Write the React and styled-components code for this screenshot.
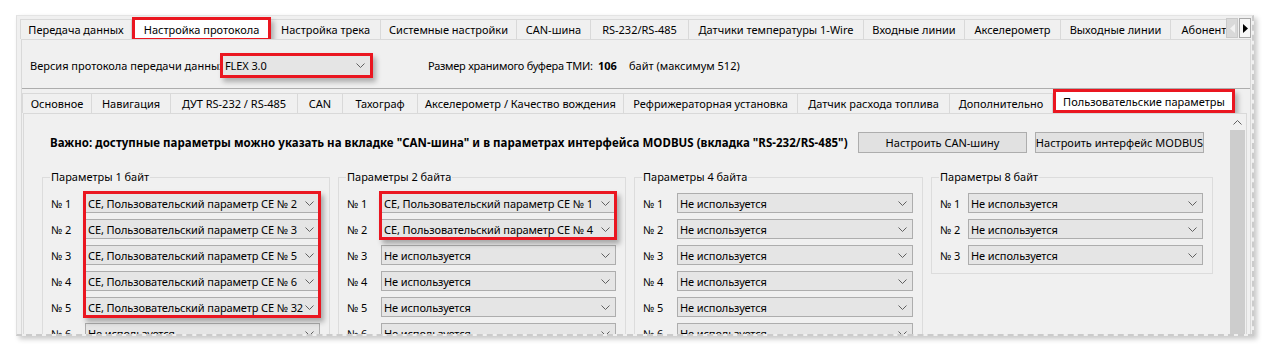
import React from "react";
import styled, { createGlobalStyle, css } from "styled-components";

const RED = "#ea1620";

const GlobalStyle = createGlobalStyle`
  html, body { margin: 0; padding: 0; background: #fff; }
  body {
    font-family: "Noto Sans", "Segoe UI", sans-serif;
    font-size: 11px;
    color: #000;
  }
`;

const ring = css`
  box-shadow: 0 0 0 3px ${RED}, 3px 4px 5px 3px rgba(0, 0, 0, 0.28);
  position: relative;
  z-index: 2;
`;

const Page = styled.div`
  padding: 15px 0 0 16px;
  height: 351px;
  box-sizing: border-box;
`;

const Window = styled.div`
  width: 1238px;
  height: 321px;
  box-sizing: border-box;
  background: #f0f0f0;
  overflow: hidden;
  padding: 0 1px 0 4px;
  border-top: 1px solid #e4e4e4;
  border-left: 1px solid #e0e0e0;
  border-right: 2px dashed #cbcbcb;
  border-bottom: 2px dashed #cbcbcb;
  box-shadow: 3px 3px 5px rgba(0, 0, 0, 0.22);
  display: flex;
  flex-direction: column;
`;

const TabStrip = styled.div`
  display: flex;
  align-items: flex-end;
  height: ${(p) => p.$h}px;
  flex: none;
`;

const TabList = styled.div`
  display: flex;
  align-items: flex-end;
  flex: 1;
  min-width: 0;
  height: 100%;
  overflow: hidden;
  padding: 0 3px;
  margin: 0 -3px;
`;

const Tab = styled.div`
  flex: none;
  width: ${(p) => p.$w}px;
  height: ${(p) => (p.$active ? p.$h - 2 : p.$h)}px;
  box-sizing: border-box;
  border: 1px solid #d9d9d9;
  border-bottom: none;
  margin-left: -1px;
  background: #f0f0f0;
  display: flex;
  align-items: center;
  justify-content: center;
  white-space: nowrap;
  ${(p) =>
    p.$active &&
    css`
      background: #fff;
      margin: 0 3px ${p.$drop}px 3px;
      border: none;
      ${ring}
    `}
`;

const ArrowBox = styled.div`
  width: 12px;
  height: 20px;
  box-sizing: border-box;
  border: 1px solid ${(p) => (p.$off ? "#c9c9c9" : "#a8a8a8")};
  background: ${(p) => (p.$off ? "#d9d9d9" : "#f6f6f6")};
  margin: 0 0 1px 1px;
  align-self: flex-end;
  display: flex;
  align-items: center;
  justify-content: center;
`;

const TopPage = styled.div`
  flex: 1;
  border: 1px solid #d9d9d9;
  border-bottom: none;
  display: flex;
  flex-direction: column;
  min-height: 0;
`;

const ProtocolRow = styled.div`
  display: flex;
  align-items: center;
  height: 49px;
  padding: 2px 0 0 8px;
  box-sizing: border-box;
  border-bottom: 1px solid #adadad;
  flex: none;
`;

const FieldText = styled.div`
  flex: none;
  width: ${(p) => p.$w}px;
  margin-left: ${(p) => p.$ml || 0}px;
  font-weight: ${(p) => (p.$bold ? 700 : 400)};
  letter-spacing: ${(p) => p.$ls || 0}px;
  white-space: nowrap;
`;

const ComboBox = styled.div`
  width: ${(p) => (p.$w ? `${p.$w}px` : "auto")};
  min-width: 0;
  height: ${(p) => (p.$w ? 21 : 20)}px;
  box-sizing: border-box;
  border: 1px solid ${(p) => (p.$mark ? RED : "#adadad")};
  background: #e5e5e5;
  display: flex;
  align-items: center;
  padding: 0 5px 0 2px;
  white-space: nowrap;
  letter-spacing: -0.1px;
  grid-column: 2;
  grid-row: ${(p) => p.$row || "auto"};
  ${(p) =>
    p.$mark &&
    css`
      box-shadow: 0 0 0 2px ${RED}, 3px 4px 5px 2px rgba(0, 0, 0, 0.28);
    `}
  span {
    flex: 1;
    min-width: 0;
    overflow: hidden;
  }
`;

const InnerArea = styled.div`
  flex: 1;
  display: flex;
  flex-direction: column;
  margin: 0 3px 0 1px;
  min-height: 0;
`;

const InnerPage = styled.div`
  flex: 1;
  display: flex;
  border: 1px solid #d9d9d9;
  border-bottom: none;
  min-height: 0;
`;

const ScrollContent = styled.div`
  flex: 1;
  padding: 18px 0 0 18px;
  min-width: 0;
`;

const NoticeRow = styled.div`
  display: flex;
  align-items: center;
  gap: 8px;
  padding-left: 8px;
`;

const Notice = styled.div`
  flex: none;
  width: 800px;
  font-weight: 700;
  font-size: 11.5px;
  letter-spacing: 0.03px;
  white-space: nowrap;
`;

const Button = styled.div`
  flex: none;
  width: 169px;
  height: 21px;
  box-sizing: border-box;
  border: 1px solid #adadad;
  background: #e1e1e1;
  display: flex;
  align-items: center;
  justify-content: center;
  white-space: nowrap;
`;

const Groups = styled.div`
  display: grid;
  grid-template-columns: 288px 288px 289px 282px;
  column-gap: 8px;
  align-items: start;
  margin-top: 16px;
`;

const Group = styled.fieldset`
  margin: 0;
  padding: 0 9px 0 8px;
  border: 1px solid #dcdcdc;
  min-width: 0;
  width: 100%;
  box-sizing: border-box;
`;

const GroupTitle = styled.legend`
  padding: 0 1px;
  margin-left: -1px;
  line-height: 16px;
`;

const Rows = styled.div`
  display: grid;
  grid-template-columns: ${(p) => p.$labelW}px minmax(0, 1fr);
  grid-auto-rows: 20px;
  row-gap: 6px;
  padding: 8px 0;
`;

const RowLabel = styled.div`
  grid-column: 1;
  grid-row: ${(p) => p.$row};
  display: flex;
  align-items: center;
  white-space: nowrap;
`;

const Highlight = styled.div`
  grid-column: 2;
  grid-row: 1 / span ${(p) => p.$n};
  margin: -2px -1px -1px -2px;
  border: 3px solid ${RED};
  box-shadow: 3px 4px 5px rgba(0, 0, 0, 0.3);
  pointer-events: none;
  z-index: 3;
`;

const Scrollbar = styled.div`
  flex: none;
  width: 17px;
  margin-left: 1px;
  display: flex;
  flex-direction: column;
  padding-top: 1px;
`;

const ScrollUp = styled.div`
  height: 15px;
  display: flex;
  align-items: center;
  justify-content: center;
`;

const Thumb = styled.div`
  flex: 1;
  margin: 0 1px;
  background: #cdcdcd;
`;

const Chevron = ({ up }) => (
  <svg width="9" height="5" viewBox="0 0 9 5" style={{ flex: "none" }}>
    <polyline
      points={up ? "0.5,4.5 4.5,0.5 8.5,4.5" : "0.5,0.5 4.5,4.5 8.5,0.5"}
      fill="none"
      stroke="#606060"
      strokeWidth="1"
    />
  </svg>
);

const Triangle = ({ left, color }) => (
  <svg width="5" height="9" viewBox="0 0 5 9">
    <polygon points={left ? "5,0 0,4.5 5,9" : "0,0 5,4.5 0,9"} fill={color} />
  </svg>
);

const Combo = ({ children, ...rest }) => (
  <ComboBox {...rest}>
    <span>{children}</span>
    <Chevron />
  </ComboBox>
);

const topTabs = [
  ["Передача данных", 112],
  ["Настройка протокола", 133, true],
  ["Настройка трека", 111],
  ["Системные настройки", 137],
  ["CAN-шина", 75],
  ["RS-232/RS-485", 99],
  ["Датчики температуры 1-Wire", 176],
  ["Входные линии", 102],
  ["Акселерометр", 97],
  ["Выходные линии", 111],
  ["Абонент", 68],
];

const innerTabs = [
  ["Основное", 70],
  ["Навигация", 80],
  ["ДУТ RS-232 / RS-485", 128],
  ["CAN", 46],
  ["Тахограф", 76],
  ["Акселерометр / Качество вождения", 207],
  ["Рефрижераторная установка", 175],
  ["Датчик расхода топлива", 153],
  ["Дополнительно", 104],
  ["Пользовательские параметры", 176, true],
];

const ce = (n) => `СЕ, Пользовательский параметр СЕ № ${n}`;
const unused = (k) => Array.from({ length: k }, () => "Не используется");

const groups = [
  { title: "Параметры 1 байт", labelW: 34, mark: 5, rows: [ce(2), ce(3), ce(5), ce(6), ce(32), ...unused(3)] },
  { title: "Параметры 2 байта", labelW: 34, mark: 2, rows: [ce(1), ce(4), ...unused(6)] },
  { title: "Параметры 4 байта", labelW: 34, mark: 0, rows: unused(8) },
  { title: "Параметры 8 байт", labelW: 28, mark: 0, rows: unused(3) },
];

export default function App() {
  return (
    <>
      <GlobalStyle />
      <Page>
        <Window>
          <TabStrip $h={23}>
            <TabList>
              {topTabs.map(([t, w, a]) => (
                <Tab key={t} $w={w} $h={20} $active={a} $drop={1}>
                  {t}
                </Tab>
              ))}
            </TabList>
            <ArrowBox $off>
              <Triangle left color="#f2f2f2" />
            </ArrowBox>
            <ArrowBox>
              <Triangle color="#000" />
            </ArrowBox>
          </TabStrip>

          <TopPage>
            <ProtocolRow>
              <FieldText $w={192}>Версия протокола передачи данных</FieldText>
              <Combo $w={149} $mark>
                FLEX 3.0
              </Combo>
              <FieldText $w={170} $ml={57} $ls={-0.25}>
                Размер хранимого буфера ТМИ:
              </FieldText>
              <FieldText $w={31} $bold>
                106
              </FieldText>
              <FieldText $w={140}>байт (максимум 512)</FieldText>
            </ProtocolRow>

            <InnerArea>
              <TabStrip $h={24}>
                <TabList>
                  {innerTabs.map(([t, w, a]) => (
                    <Tab key={t} $w={w} $h={20} $active={a} $drop={3}>
                      {t}
                    </Tab>
                  ))}
                </TabList>
              </TabStrip>

              <InnerPage>
                <ScrollContent>
                  <NoticeRow>
                    <Notice>
                      Важно: доступные параметры можно указать на вкладке "CAN-шина" и в параметрах интерфейса MODBUS
                      (вкладка "RS-232/RS-485")
                    </Notice>
                    <Button>Настроить CAN-шину</Button>
                    <Button>Настроить интерфейс MODBUS</Button>
                  </NoticeRow>

                  <Groups>
                    {groups.map((g) => (
                      <Group key={g.title}>
                        <GroupTitle>{g.title}</GroupTitle>
                        <Rows $labelW={g.labelW}>
                          {g.rows.map((r, i) => (
                            <React.Fragment key={i}>
                              <RowLabel $row={i + 1}>№ {i + 1}</RowLabel>
                              <Combo $row={i + 1}>{r}</Combo>
                            </React.Fragment>
                          ))}
                          {g.mark > 0 && <Highlight $n={g.mark} />}
                        </Rows>
                      </Group>
                    ))}
                  </Groups>
                </ScrollContent>
                <Scrollbar>
                  <ScrollUp>
                    <Chevron up />
                  </ScrollUp>
                  <Thumb />
                </Scrollbar>
              </InnerPage>
            </InnerArea>
          </TopPage>
        </Window>
      </Page>
    </>
  );
}
